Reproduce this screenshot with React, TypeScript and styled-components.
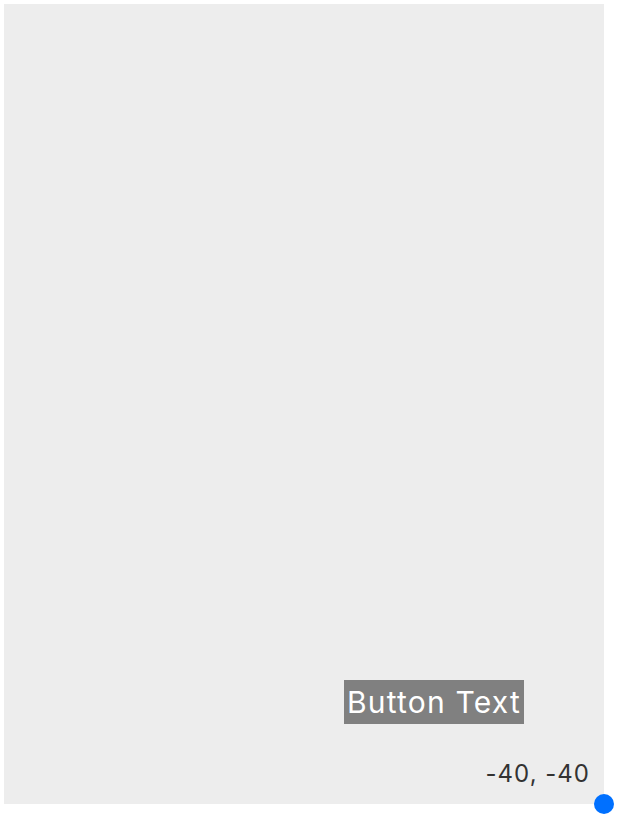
import React from "react";
import styled, { createGlobalStyle } from "styled-components";

const Global = createGlobalStyle`
  html, body { margin: 0; padding: 0; background: #ffffff; }
  body { font-family: Inter, "Noto Sans", sans-serif; }
`;

const Page = styled.div`
  padding: 4px;
  min-height: 820px;
  box-sizing: border-box;
`;

const Canvas = styled.div`
  position: relative;
  width: 600px;
  height: 800px;
  background: #ededed;
`;

const Button = styled.div<{ $right: number; $bottom: number }>`
  position: absolute;
  right: ${(p) => p.$right}px;
  bottom: ${(p) => p.$bottom}px;
  width: 180px;
  height: 44px;
  background: #808080;
  color: #ffffff;
  display: flex;
  align-items: center;
  justify-content: center;
  font-size: 30px;
  letter-spacing: 1.2px;
  font-weight: 400;
  line-height: 1;
`;

const Coord = styled.div`
  position: absolute;
  right: 14px;
  bottom: 18px;
  font-size: 24px;
  letter-spacing: 1px;
  color: #333333;
  line-height: 1;
`;

const Handle = styled.div`
  position: absolute;
  right: -10px;
  bottom: -10px;
  width: 20px;
  height: 20px;
  border-radius: 50%;
  background: #0070ff;
`;

export default function App() {
  return (
    <>
      <Global />
      <Page>
        <Canvas>
          <Button $right={80} $bottom={80}>Button Text</Button>
          <Coord>-40, -40</Coord>
          <Handle />
        </Canvas>
      </Page>
    </>
  );
}
